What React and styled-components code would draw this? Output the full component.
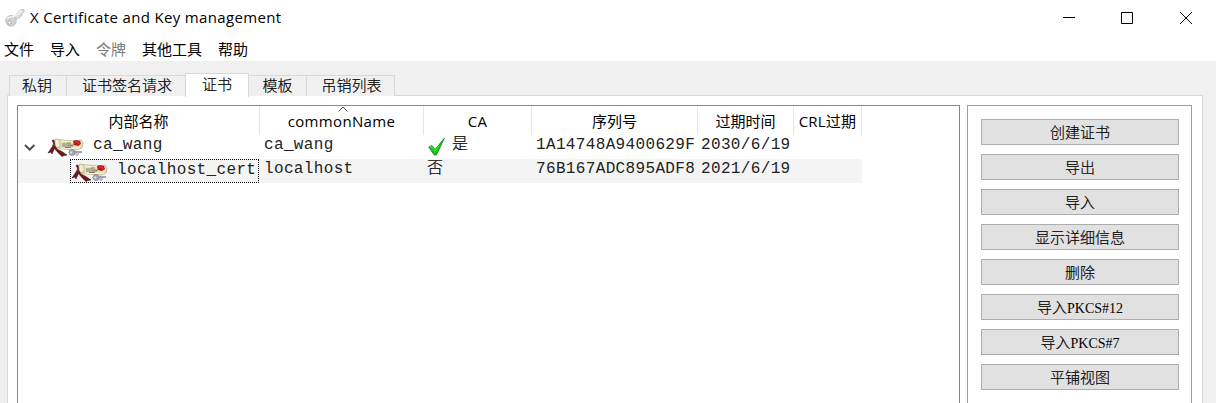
import React from "react";
import styled, { createGlobalStyle } from "styled-components";

const Global = createGlobalStyle`
  * { box-sizing: border-box; }
  body { margin: 0; background: #fff; overflow: hidden; }
`;

const Window = styled.div`
  width: 1216px;
  height: 403px;
  display: flex;
  flex-direction: column;
  overflow: hidden;
  background: #fff;
  color: #000;
  font: 15px/20px "Noto Sans", "Noto Sans CJK SC", sans-serif;
  white-space: nowrap;
`;
const TitleBar = styled.header`
  height: 35px;
  flex: none;
  display: flex;
  align-items: center;
  padding-left: 4px;
`;
const Title = styled.span`
  flex: 1;
  padding: 0 0 2px 5px;
  font-family: "Open Sans", sans-serif;
  font-size: 15px;
  letter-spacing: ${(p) => p.$spacing};
`;
const Controls = styled.div`
  display: flex;
  svg { display: block; }
`;
const MenuBar = styled.nav`
  height: 26px;
  flex: none;
  display: flex;
  gap: 16px;
  padding: 4px 0 0 4px;
`;
const MenuItem = styled.span`
  font-family: "Noto Sans CJK SC", sans-serif;
  color: ${(p) => (p.$disabled ? "#7b7b7b" : "#000")};
`;
const Body = styled.main`
  flex: 1;
  display: flex;
  flex-direction: column;
  padding: 12px 13px 0 7px;
  background: #f0f0f0;
`;
const Tabs = styled.div`
  display: flex;
  align-items: flex-end;
  height: 23px;
  padding-left: 2px;
  margin-bottom: -1px;
  z-index: 1;
`;
const Tab = styled.div`
  width: ${(p) => p.$width}px;
  height: ${(p) => (p.$active ? 24 : 21)}px;
  flex: none;
  align-self: ${(p) => (p.$active ? "flex-start" : "flex-end")};
  border: 1px solid #d9d9d9;
  border-bottom: 0;
  border-right-width: ${(p) => (p.$last || p.$active ? 1 : 0)}px;
  border-left-width: ${(p) => (p.$joined ? 0 : 1)}px;
  background: ${(p) => (p.$active ? "#fff" : "#f0f0f0")};
  font: 300 15px "Noto Sans CJK SC", sans-serif;
  line-height: ${(p) => (p.$active ? 20 : 18)}px;
  -webkit-text-stroke: 0.2px #000;
  text-indent: ${(p) => p.$indent || 0}px;
  text-align: center;
`;
const Pane = styled.section`
  flex: 1;
  display: flex;
  gap: 7px;
  padding: 9px 10px 0 9px;
  border: 1px solid #d9d9d9;
  border-bottom: 0;
  background: #fff;
`;
const Tree = styled.div`
  width: 943px;
  border: 1px solid #828790;
  border-bottom: 0;
`;
const Row = styled.div`
  display: grid;
  grid-template-columns: 242px 164px 108px 166px 96px 68px;
  width: 844px;
  height: ${(p) => p.$height}px;
  background: ${(p) => (p.$shaded ? "#f4f4f4" : "#fff")};
`;
const HeaderCell = styled.div`
  display: flex;
  flex-direction: column;
  align-items: center;
  position: relative;
  border-right: 1px solid #e5e5e5;
  padding-top: 5px;
  font-family: "Open Sans", "Noto Sans CJK SC", sans-serif;
  line-height: 20px;
  letter-spacing: ${(p) => p.$spacing || "0"};
`;
const SortMark = styled.svg`
  position: absolute;
  top: 0;
  left: 78px;
`;
const Cell = styled.div`
  display: flex;
  align-items: flex-start;
  min-width: 0;
  padding-left: ${(p) => p.$inset ?? 4}px;
`;
const Mono = styled.span`
  font: 16px/20px "Liberation Mono", monospace;
  letter-spacing: 0.35px;
  color: #222;
`;
const Cjk = styled.span`
  font: 300 16px/15px "Noto Sans CJK SC", sans-serif;
  -webkit-text-stroke: 0.2px #000;
`;
const Focus = styled.div`
  width: 189px;
  height: 24px;
  display: flex;
  align-items: flex-start;
  border: 1px dotted #000;
  margin-left: 52px;
`;
const Side = styled.aside`
  width: 225px;
  border: 1px solid #a0a0a0;
  border-bottom: 0;
  display: flex;
  flex-direction: column;
  gap: 9px;
  padding: 13px 12px 0 13px;
`;
const Button = styled.button`
  height: 26px;
  flex: none;
  padding: 0;
  border: 1px solid #adadad;
  border-radius: 0;
  background: #e1e1e1;
  color: #000;
  font: 300 15px/24px "Noto Sans CJK SC", sans-serif;
  -webkit-text-stroke: 0.2px #000;
`;
const Code = styled.span`
  font: 14px/20px "Liberation Serif", serif;
  -webkit-text-stroke: 0;
`;
const IconSlot = styled.span`
  flex: none;
  width: ${(p) => (p.$focused ? 46 : 46)}px;
  padding-top: 3px;
`;
const CheckSlot = styled.span`
  flex: none;
  width: 24px;
  padding-top: 2px;
`;

const KeyIcon = () => (
  <svg width="21" height="20" viewBox="0 0 21 20">
    <path d="M9 9 17 1.5 20 1.5 20 4 18 6 18 8 16 8 15.5 10 13.5 10 11.5 12.5Z" fill="#dedede" stroke="#bdbdbd" strokeWidth=".8" />
    <circle cx="7" cy="12.8" r="5.3" fill="#d3d3d3" stroke="#b5b5b5" strokeWidth=".8" />
    <path d="M3 11Q5 8 9 9L18 2.5" fill="none" stroke="#f1f1f1" strokeWidth="1.6" />
    <circle cx="5.5" cy="14.5" r="1.7" fill="#fff" stroke="#999" strokeWidth=".8" />
  </svg>
);

const CertIcon = () => (
  <svg width="37" height="20" viewBox="0 0 37 20">
    <path d="M10 1.5 28 3 34 2 36 5 35 10 30 12 14 11 9 9Z" fill="#e4e1bb" stroke="#b8b58c" strokeWidth=".8" />
    <path d="M8 1.5Q11 0 13 3L13 9Q10 11 8 8Z" fill="#f1edcc" stroke="#a9a37e" strokeWidth=".7" />
    <path d="M13 3 30 4M14 11 33 10" stroke="#f7f4d7" strokeWidth="1" />
    <path d="M15 6h6M15 8h11M18 9.5h6M20 5h4M21 7h6" stroke="#66644f" strokeWidth=".8" />
    <path d="M5 2.5Q8 6 5 9L1 15 4 14 5 16 8 9 7 2ZM8 8Q10 12 14 13L20 17 17 17.5 15 18.5Q11 15 7 10Z" fill="#6b171c" stroke="#511014" strokeWidth=".6" />
    <path d="M26 3 29 2 33 3 34 6 31 8 27 7Z" fill="#ba151b" />
    <path d="M28 4 31 4 32 6" fill="none" stroke="#df4544" strokeWidth="1" />
    <path d="M27 13h8v2h-8z" fill="#a2a4b2" />
    <circle cx="25" cy="14.5" r="3" fill="#a9abb7" stroke="#777985" strokeWidth=".7" />
    <circle cx="24" cy="14.5" r="1" fill="#ececf2" />
    <path d="M29 15v2h2v-2" fill="none" stroke="#9295a4" />
  </svg>
);

const CheckIcon = () => (
  <svg width="18" height="19" viewBox="0 0 18 19">
    <path d="M.7 10 4 8.5 7 12.5 16.5 1 8.4 18 6.2 18Z" fill="#12c51b" stroke="#138317" strokeWidth=".8" />
    <path d="M2 10 4 10 7 14 11 9" fill="none" stroke="#56e94a" strokeWidth="1" />
  </svg>
);

const tabs = [
  { text: "私钥", width: 57, indent: -2 },
  { text: "证书签名请求", width: 119, indent: 2 },
  { text: "证书", width: 64, active: true },
  { text: "模板", width: 57, joined: true },
  { text: "吊销列表", width: 89, last: true, indent: 2 },
];

export default function App() {
  return (
    <Window>
      <Global />
      <TitleBar>
        <KeyIcon />
        <Title $spacing="0.34px">X Certificate and Key management</Title>
        <Controls>
          <svg width="154" height="34" viewBox="0 0 154 34" fill="none" stroke="#000">
            <path d="M1 16.5h12M59.5 11.5h11v11h-11z" />
            <path d="m118 11 12 12m0-12-12 12" />
          </svg>
        </Controls>
      </TitleBar>
      <MenuBar>
        {["文件", "导入", "令牌", "其他工具", "帮助"].map((t) => (
          <MenuItem key={t} $disabled={t === "令牌"}>{t}</MenuItem>
        ))}
      </MenuBar>
      <Body>
        <Tabs>
          {tabs.map((t) => (
            <Tab key={t.text} $width={t.width} $active={t.active} $joined={t.joined} $last={t.last} $indent={t.indent}>{t.text}</Tab>
          ))}
        </Tabs>
        <Pane>
          <Tree>
            <Row $height={29}>
              <HeaderCell>内部名称</HeaderCell>
              <HeaderCell $spacing="0.35px">
                <SortMark width="10" height="6" viewBox="0 0 10 6" fill="none" stroke="#555">
                  <path d="m.5 5.5 4.5-4.5 4.5 4.5" />
                </SortMark>
                commonName
              </HeaderCell>
              <HeaderCell $spacing="0.3px">CA</HeaderCell>
              <HeaderCell>序列号</HeaderCell>
              <HeaderCell>过期时间</HeaderCell>
              <HeaderCell $spacing="0.2px">CRL过期</HeaderCell>
            </Row>
            <Row $height={24}>
              <Cell $inset={6}>
                <svg width="23" height="24" viewBox="0 0 23 24" fill="none" stroke="#444" strokeWidth="1.8">
                  <path d="m1 10 4.7 4.7L10.4 10" />
                </svg>
                <IconSlot><CertIcon /></IconSlot>
                <Mono>ca_wang</Mono>
              </Cell>
              <Cell><Mono>ca_wang</Mono></Cell>
              <Cell>
                <CheckSlot><CheckIcon /></CheckSlot>
                <Cjk>是</Cjk>
              </Cell>
              <Cell><Mono>1A14748A9400629F</Mono></Cell>
              <Cell $inset={3}><Mono>2030/6/19</Mono></Cell>
              <Cell />
            </Row>
            <Row $height={24} $shaded>
              <Cell $inset={0}>
                <Focus>
                  <IconSlot $focused><CertIcon /></IconSlot>
                  <Mono>localhost_cert</Mono>
                </Focus>
              </Cell>
              <Cell><Mono>localhost</Mono></Cell>
              <Cell $inset={3}><Cjk>否</Cjk></Cell>
              <Cell><Mono>76B167ADC895ADF8</Mono></Cell>
              <Cell $inset={3}><Mono>2021/6/19</Mono></Cell>
              <Cell />
            </Row>
          </Tree>
          <Side>
            <Button>创建证书</Button>
            <Button>导出</Button>
            <Button>导入</Button>
            <Button>显示详细信息</Button>
            <Button>删除</Button>
            <Button>导入<Code>PKCS#12</Code></Button>
            <Button>导入<Code>PKCS#7</Code></Button>
            <Button>平铺视图</Button>
          </Side>
        </Pane>
      </Body>
    </Window>
  );
}
